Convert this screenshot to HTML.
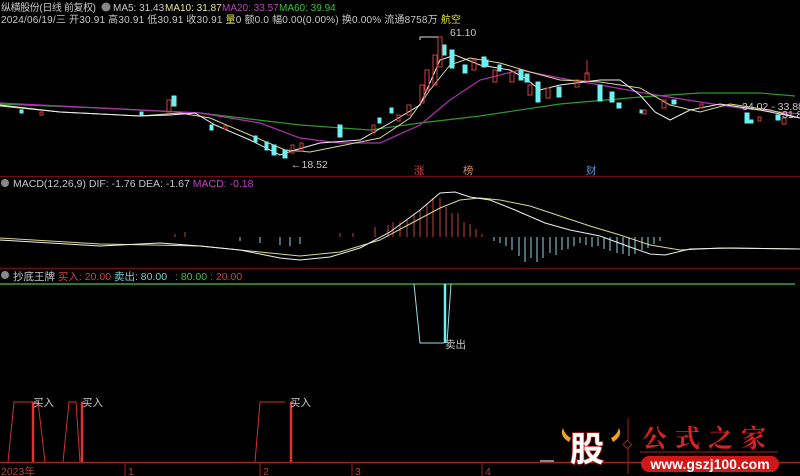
<!DOCTYPE html>
<html><head><meta charset="utf-8"><style>
html,body{margin:0;padding:0;background:#000;width:800px;height:476px;overflow:hidden}
svg{display:block}
text{font-family:"Liberation Sans","Noto Sans CJK SC",sans-serif;font-size:10.5px}
.h{font-size:10px}
</style></head><body>
<svg width="800" height="476" viewBox="0 0 800 476" xmlns="http://www.w3.org/2000/svg">
<rect width="800" height="476" fill="#000"/>
<!-- header -->
<text class="h" x="1" y="11" fill="#c8c8c8" textLength="95">纵横股份(日线 前复权)</text>
<circle cx="106" cy="7" r="4.5" fill="#888"/>
<text class="h" x="113" y="11" fill="#c8c8c8">MA5: 31.43</text>
<text class="h" x="165" y="11" fill="#e6e6a0">MA10: 31.87</text>
<text class="h" x="222" y="11" fill="#c040c0">MA20: 33.57</text>
<text class="h" x="279" y="11" fill="#40c040">MA60: 39.94</text>
<text class="h" x="1" y="23" fill="#c8c8c8" textLength="460">2024/06/19/三 开30.91 高30.91 低30.91 收30.91 <tspan fill="#e0e040">量</tspan>0 额0.0 幅0.00(0.00%) 换0.00% 流通8758万 <tspan fill="#e0e040">航空</tspan></text>

<!-- main chart lines -->
<polyline fill="none" stroke="#2e9a2e" stroke-width="1.2" points="0,104 100,108 200,113 300,125 370,130 420,123 480,116 560,104 640,97 700,93 760,93 795,96"/>
<polyline fill="none" stroke="#b030b0" stroke-width="1.2" points="0,103 100,108 200,113 260,123 300,138 340,143 380,143 420,125 450,100 480,80 520,70 560,78 600,85 650,94 700,102 740,108 800,114"/>
<polyline fill="none" stroke="#d8d890" stroke-width="1" points="0,106 60,112 140,116 180,113 210,118 250,135 285,150 310,152 340,146 380,138 410,118 430,90 450,65 470,58 500,63 530,72 560,80 600,82 640,88 670,105 700,112 730,104 770,110 800,118"/>
<polyline fill="none" stroke="#eeeeee" stroke-width="1" points="0,105 60,112 140,116 170,115 195,113 215,125 250,140 280,155 295,150 320,143 360,140 390,123 420,105 440,60 455,55 480,65 510,70 525,78 540,90 560,85 600,80 620,80 640,95 655,112 670,120 690,110 720,104 760,110 800,118"/>
<!-- candles -->
<g stroke-width="1">
<g fill="#6ff0f0" stroke="#6ff0f0">
<rect x="172" y="96" width="4" height="10"/><rect x="140" y="112" width="3" height="3"/><rect x="210" y="125" width="3" height="5"/>
<rect x="254" y="136" width="3" height="6"/><rect x="265" y="142" width="3" height="8"/><rect x="272" y="145" width="4" height="10"/>
<rect x="283" y="150" width="4" height="8"/><rect x="338" y="125" width="4" height="12"/><rect x="20" y="110" width="3" height="3"/>
<rect x="442" y="45" width="4" height="10"/><rect x="450" y="50" width="4" height="18"/><rect x="463" y="65" width="4" height="8"/>
<rect x="482" y="57" width="4" height="10"/><rect x="485" y="60" width="3" height="6"/><rect x="498" y="65" width="3" height="6"/>
<rect x="519" y="70" width="4" height="10"/><rect x="525" y="74" width="4" height="8"/><rect x="536" y="82" width="4" height="20"/>
<rect x="557" y="87" width="4" height="10"/><rect x="598" y="85" width="4" height="16"/><rect x="610" y="92" width="4" height="10"/>
<rect x="617" y="103" width="4" height="5"/><rect x="640" y="110" width="3" height="3"/><rect x="672" y="100" width="4" height="4"/>
<rect x="745" y="113" width="4" height="10"/><rect x="776" y="115" width="4" height="5"/><rect x="750" y="120" width="3" height="3"/>
<rect x="378" y="118" width="3" height="5"/><rect x="390" y="108" width="3" height="5"/>
</g>
<g fill="none" stroke="#d04040">
<rect x="167" y="100" width="4" height="12"/><rect x="291" y="145" width="3" height="8"/><rect x="300" y="143" width="3" height="8"/>
<rect x="372" y="125" width="3" height="8"/><rect x="397" y="115" width="3" height="6"/><rect x="407" y="105" width="4" height="10"/>
<rect x="420" y="85" width="4" height="18"/><rect x="425" y="70" width="4" height="20"/><rect x="433" y="55" width="4" height="30"/>
<rect x="438" y="37" width="4" height="30"/><rect x="472" y="60" width="4" height="10"/><rect x="493" y="70" width="4" height="12"/>
<rect x="510" y="72" width="4" height="10"/><rect x="528" y="85" width="4" height="10"/><rect x="546" y="88" width="4" height="10"/>
<rect x="575" y="80" width="4" height="7"/><rect x="585" y="73" width="4" height="8"/><rect x="643" y="110" width="3" height="4"/>
<rect x="662" y="100" width="4" height="8"/><rect x="700" y="104" width="3" height="4"/><rect x="758" y="117" width="3" height="4"/>
<rect x="782" y="118" width="4" height="6"/><rect x="224" y="126" width="3" height="3"/><rect x="40" y="112" width="3" height="3"/>
</g>
<line x1="587" y1="60" x2="587" y2="75" stroke="#d04040"/>
</g>
<polyline fill="none" stroke="#ddd" points="420,40 420,37 438,37"/>
<text x="450" y="36" fill="#c8c8c8">61.10</text>
<text x="291" y="168" fill="#c8c8c8">←18.52</text>
<text x="742" y="110" fill="#c8c8c8">34.02 - 33.88</text>
<text x="782" y="118" fill="#c8c8c8">31.8</text>
<text x="414" y="174" fill="#d04040">涨</text>
<text x="463" y="174" fill="#d09060">榜</text>
<text x="586" y="174" fill="#6090d0">财</text>
<line x1="0" y1="176.5" x2="800" y2="176.5" stroke="#6a1010" stroke-width="1.5"/>

<!-- MACD -->
<circle cx="5" cy="183" r="4" fill="#888"/>
<text x="13" y="187" fill="#c8c8c8">MACD(12,26,9) DIF: -1.76 DEA: -1.67 <tspan fill="#c040c0">MACD: -0.18</tspan></text>
<g stroke="#c04040" stroke-width="1">
<line x1="340" y1="237" x2="340" y2="233"/><line x1="353" y1="237" x2="353" y2="233"/><line x1="375" y1="237" x2="375" y2="227"/>
<line x1="388" y1="237" x2="388" y2="225"/><line x1="393" y1="237" x2="393" y2="222"/><line x1="400" y1="237" x2="400" y2="222"/>
<line x1="407" y1="237" x2="407" y2="220"/><line x1="414" y1="237" x2="414" y2="214"/><line x1="420" y1="237" x2="420" y2="210"/>
<line x1="427" y1="237" x2="427" y2="204"/><line x1="433" y1="237" x2="433" y2="198"/><line x1="440" y1="237" x2="440" y2="198"/>
<line x1="446" y1="237" x2="446" y2="207"/><line x1="452" y1="237" x2="452" y2="213"/><line x1="458" y1="237" x2="458" y2="213"/>
<line x1="464" y1="237" x2="464" y2="222"/><line x1="470" y1="237" x2="470" y2="224"/><line x1="476" y1="237" x2="476" y2="229"/>
<line x1="482" y1="237" x2="482" y2="234"/><line x1="175" y1="237" x2="175" y2="234"/><line x1="185" y1="237" x2="185" y2="232"/>
</g>
<g stroke="#8fd8e8" stroke-width="1">
<line x1="494" y1="237" x2="494" y2="241"/><line x1="500" y1="237" x2="500" y2="243"/><line x1="506" y1="237" x2="506" y2="246"/>
<line x1="512" y1="237" x2="512" y2="250"/><line x1="519" y1="237" x2="519" y2="256"/><line x1="525" y1="237" x2="525" y2="262"/>
<line x1="531" y1="237" x2="531" y2="258"/><line x1="537" y1="237" x2="537" y2="262"/><line x1="543" y1="237" x2="543" y2="258"/>
<line x1="550" y1="237" x2="550" y2="253"/><line x1="556" y1="237" x2="556" y2="255"/><line x1="562" y1="237" x2="562" y2="250"/>
<line x1="568" y1="237" x2="568" y2="249"/><line x1="574" y1="237" x2="574" y2="246"/><line x1="580" y1="237" x2="580" y2="243"/>
<line x1="586" y1="237" x2="586" y2="245"/><line x1="592" y1="237" x2="592" y2="247"/><line x1="598" y1="237" x2="598" y2="246"/>
<line x1="604" y1="237" x2="604" y2="249"/><line x1="610" y1="237" x2="610" y2="251"/><line x1="617" y1="237" x2="617" y2="253"/>
<line x1="623" y1="237" x2="623" y2="254"/><line x1="629" y1="237" x2="629" y2="256"/><line x1="635" y1="237" x2="635" y2="254"/>
<line x1="642" y1="237" x2="642" y2="250"/><line x1="648" y1="237" x2="648" y2="248"/><line x1="654" y1="237" x2="654" y2="244"/>
<line x1="660" y1="237" x2="660" y2="241"/>
<line x1="240" y1="237" x2="240" y2="241"/><line x1="260" y1="237" x2="260" y2="243"/><line x1="280" y1="237" x2="280" y2="245"/>
<line x1="290" y1="237" x2="290" y2="246"/><line x1="300" y1="237" x2="300" y2="244"/>
</g>
<polyline fill="none" stroke="#d8d890" stroke-width="1" points="0,238 100,244 200,246 260,252 300,256 340,252 380,240 410,224 440,208 460,200 480,198 500,200 530,206 560,216 590,226 620,235 650,245 680,250 720,248 800,249"/>
<polyline fill="none" stroke="#eeeeee" stroke-width="1" points="0,240 100,246 160,243 200,246 240,250 280,258 300,260 330,257 360,248 390,232 420,210 440,193 455,192 470,197 490,200 515,210 545,223 570,230 600,236 630,247 650,254 665,255 690,249 730,248 800,249"/>
<line x1="0" y1="268.5" x2="800" y2="268.5" stroke="#6a1010" stroke-width="1.5"/>

<!-- 抄底王牌 -->
<circle cx="5" cy="275" r="4" fill="#888"/>
<text x="13" y="280" fill="#c8c8c8">抄底王牌 <tspan fill="#d04040">买入: 20.00</tspan> <tspan fill="#7ad0d0">卖出: 80.00</tspan></text>
<text x="175" y="280" fill="#40c040">: 80.00 <tspan fill="#d04040">: 20.00</tspan></text>
<line x1="0" y1="284" x2="795" y2="284" stroke="#40a040" stroke-width="1.5"/>
<polyline fill="none" stroke="#9ae0e0" stroke-width="1" points="414,284 420,343 444,343"/>
<line x1="445" y1="284" x2="445" y2="343" stroke="#6ff0f0" stroke-width="2.5"/>
<line x1="447" y1="343" x2="451" y2="284" stroke="#9ae0e0" stroke-width="1"/>
<text x="445" y="348" fill="#c8c8c8">卖出</text>

<!-- buy pulses -->
<g fill="none" stroke="#d03030" stroke-width="1">
<polyline points="8,462 14,402 31,402 38,402 45,462"/>
<polyline points="63,462 69,402 76,402 80,462"/>
<polyline points="255,462 260,402 285,402"/>
</g>
<g stroke="#e03030" stroke-width="2.5">
<line x1="33" y1="402" x2="33" y2="462"/><line x1="82" y1="402" x2="82" y2="462"/><line x1="291" y1="402" x2="291" y2="462"/>
</g>
<text x="33" y="406" fill="#c8c8c8">买入</text>
<text x="82" y="406" fill="#c8c8c8">买入</text>
<text x="290" y="406" fill="#c8c8c8">买入</text>
<line x1="0" y1="462.5" x2="800" y2="462.5" stroke="#a02020" stroke-width="1.5"/>
<!-- axis -->
<g stroke="#a02020"><line x1="125" y1="463" x2="125" y2="476"/><line x1="260" y1="463" x2="260" y2="476"/><line x1="352" y1="463" x2="352" y2="476"/><line x1="482" y1="463" x2="482" y2="476"/></g>
<text x="1" y="475" fill="#b04040">2023年</text>
<text x="128" y="475" fill="#b04040">1</text>
<text x="263" y="475" fill="#b04040">2</text>
<text x="355" y="475" fill="#b04040">3</text>
<text x="485" y="475" fill="#b04040">4</text>

<!-- logo -->
<rect x="540" y="460" width="14" height="2" fill="#888"/>
<path d="M563,428 q-4,8 6,14 l2,-4 q-6,-3 -8,-10z" fill="#f0a020"/>
<path d="M619,428 q4,8 -6,14 l-2,-4 q6,-3 8,-10z" fill="#f0a020"/>
<text x="570" y="461" fill="#fff" stroke="#c02020" stroke-width="1.5" paint-order="stroke" style="font-size:34px;font-weight:bold;font-family:'Noto Sans CJK SC',sans-serif">股</text>
<line x1="628" y1="418" x2="628" y2="474" stroke="#a02020"/>
<rect x="624.5" y="441.5" width="6" height="6" transform="rotate(45 627.5 444.5)" fill="#000" stroke="#a02020"/>
<text x="642" y="447" fill="#e02020" style="font-size:25px;font-weight:bold;font-family:'Noto Serif CJK SC',serif;letter-spacing:8px">公式之家</text>
<line x1="640" y1="452" x2="778" y2="452" stroke="#a02020"/>
<rect x="641" y="456" width="138" height="16" rx="8" fill="#d01818"/>
<text x="710" y="469" fill="#fff" text-anchor="middle" style="font-size:14px;font-weight:bold">www.gszj100.com</text>
</svg>
</body></html>
